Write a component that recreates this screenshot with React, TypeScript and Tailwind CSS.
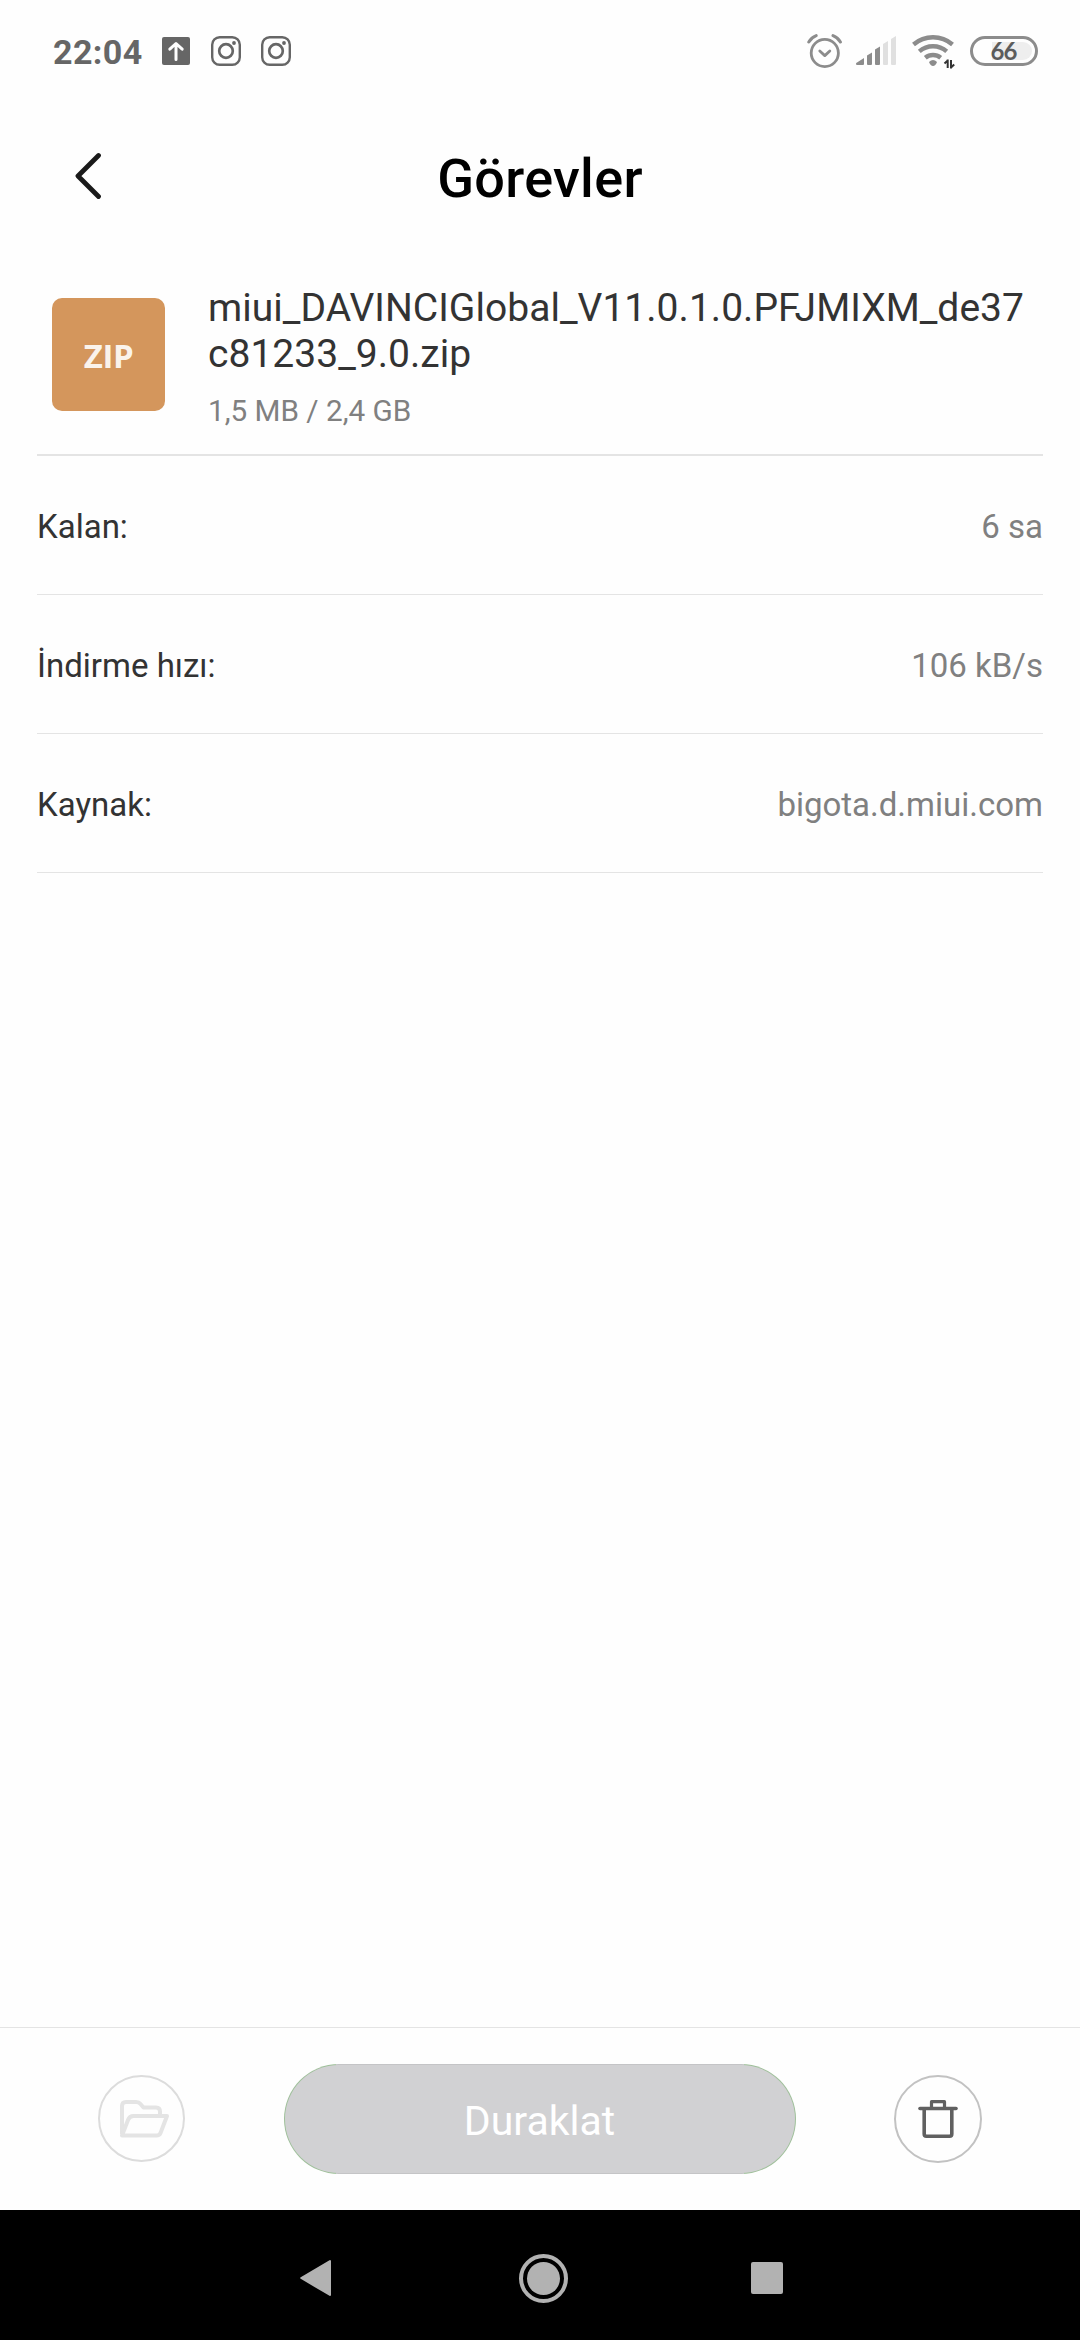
interface DetailRowProps {
  label: string;
  value: string;
}

const details: DetailRowProps[] = [
  { label: 'Kalan:', value: '6 sa' },
  { label: 'İndirme hızı:', value: '106 kB/s' },
  { label: 'Kaynak:', value: 'bigota.d.miui.com' },
];

function UploadIcon() {
  return (
    <svg width="28" height="28" viewBox="0 0 28 28" fill="none">
      <rect width="28" height="28" rx="2" fill="#666" />
      <path d="M14 22.500V7M7.800 12.200L14 6.500l6.200 5.700" stroke="#fefefe" strokeWidth="3" strokeLinecap="round" strokeLinejoin="round" />
    </svg>
  );
}

function InstagramIcon() {
  return (
    <svg width="30" height="30" viewBox="0 0 30 30" fill="none" stroke="#666">
      <rect x="1.2" y="1.2" width="27.6" height="27.6" rx="7.5" strokeWidth="2.4" />
      <circle cx="15" cy="15" r="6.8" strokeWidth="2.7" />
      <circle cx="23" cy="7" r="1.9" fill="#666" stroke="none" />
    </svg>
  );
}

function AlarmIcon() {
  return (
    <svg width="35" height="34" viewBox="0 0 35 34" fill="none" stroke="#8c8c8c" strokeLinecap="round">
      <circle cx="17.8" cy="19" r="13.6" strokeWidth="2.8" />
      <path d="M12.8 17l5 4.6 5-4.6" strokeWidth="2.8" strokeLinejoin="round" />
      <path d="M1.8 8Q4.3 3.6 9.2 1.6M33.4 8Q31 3.6 26 1.6" strokeWidth="3" />
    </svg>
  );
}

function SignalIcon() {
  return (
    <svg width="41" height="30" viewBox="0 0 41 30">
      <g fill="#8c8c8c">
        <path d="M1 26.5L8 22v6a1 1 0 0 1-1 1H1q-1 0-1-1.2Q0 27 1 26.5z" />
        <path d="M11 19.5L16 16.500V28a1 1 0 0 1-1 1H12a1 1 0 0 1-1-1z" />
        <path d="M19 13.5L24 10.5V28a1 1 0 0 1-1 1H20a1 1 0 0 1-1-1z" />
      </g>
      <g fill="#e0e0e0">
        <path d="M27 8L32 5V28a1 1 0 0 1-1 1H28a1 1 0 0 1-1-1z" />
        <path d="M35 3L40 0V28a1 1 0 0 1-1 1H36a1 1 0 0 1-1-1z" />
      </g>
    </svg>
  );
}

function WifiIcon() {
  return (
    <svg width="43" height="38" viewBox="0 0 43 38" fill="none">
      <g stroke="#8c8c8c" strokeWidth="4.4">
        <path d="M1.500 12.500a30 30 0 0 1 39 0" />
        <path d="M7.300 19.300a21 21 0 0 1 27.400 0" />
        <path d="M13.300 25.800a12 12 0 0 1 15.400 0" />
      </g>
      <path d="M17 30Q21 26 25 30Q23.5 34 21 34Q18.5 34 17 30z" fill="#8c8c8c" />
      <path d="M35.700 27.500V36M35.700 28.500L32.500 31.500M39 36.500V28M39 35.500L42.200 32.500" stroke="#333" strokeWidth="2" />
    </svg>
  );
}

function BatteryIcon() {
  return (
    <div className="flex h-[30px] w-[68px] items-center rounded-full border-[3px] border-[#8c8c8c] p-[3px]">
      <div className="flex h-[18px] w-full items-center justify-center rounded-full bg-[linear-gradient(to_right,transparent_16px,#eeeeee_16px)]">
        <span className="pr-px text-[24px] leading-[18px] font-bold tracking-[-1px] text-[#5c5c5c] font-['Lato','Roboto',sans-serif]">66</span>
      </div>
    </div>
  );
}

function StatusBar() {
  return (
    <div className="flex h-[102px] items-center justify-between pr-[42px] pl-[53px]">
      <div className="flex items-center">
        <span className="mr-5 w-[89px] pt-px text-[34px] leading-[40px] font-bold tracking-[0.4px] text-[#666]">22:04</span>
        <UploadIcon />
        <div className="ml-[21px] flex gap-5">
          <InstagramIcon />
          <InstagramIcon />
        </div>
      </div>
      <div className="flex items-center">
        <AlarmIcon />
        <div className="ml-[14px]">
          <SignalIcon />
        </div>
        <div className="ml-[15px]">
          <WifiIcon />
        </div>
        <div className="ml-[15px]">
          <BatteryIcon />
        </div>
      </div>
    </div>
  );
}

function Header() {
  return (
    <header className="grid h-[154px] grid-cols-[1fr_auto_1fr] items-center">
      <button className="mb-[6px] ml-[75px] w-[27px]" aria-label="Geri">
        <svg width="27" height="48" viewBox="0 0 27 48" fill="none" stroke="#1a1a1a" strokeWidth="4.8" strokeLinecap="round" strokeLinejoin="round">
          <path d="M23.500 3.5L3 24l20.5 20.5" />
        </svg>
      </button>
      <h1 className="text-[54px] leading-[62px] font-medium tracking-[0.3px] text-black">Görevler</h1>
    </header>
  );
}

function FileInfo() {
  return (
    <section className="flex h-[200px] border-b-2 border-[#e4e4e4] pl-[15px]">
      <div className="mt-[42px] flex size-[113px] shrink-0 items-center justify-center rounded-[10px] bg-[#d4965c]">
        <span className="pt-[3px] text-[33px] leading-[40px] font-bold tracking-[-0.5px] text-[#faf3ec] font-['Open_Sans',sans-serif]">ZIP</span>
      </div>
      <div className="ml-[43px] w-[824px] pt-[29px]">
        <p className="text-[39px] leading-[46px] tracking-[0.03px] break-all text-[#333]">miui_DAVINCIGlobal_V11.0.1.0.PFJMIXM_de37c81233_9.0.zip</p>
        <p className="mt-[14px] text-[29.7px] leading-[40px] text-[#808080]">1,5 MB / 2,4 GB</p>
      </div>
    </section>
  );
}

function DetailRow({ label, value }: DetailRowProps) {
  return (
    <div className="flex h-[139px] items-center justify-between border-b border-[#e4e4e4] pt-[3px] text-[33px] leading-[40px]">
      <span className="text-[#333]">{label}</span>
      <span className="text-[#808080]">{value}</span>
    </div>
  );
}

function ActionBar() {
  return (
    <div className="flex h-[183px] items-center justify-between border-t border-[#e4e4e4] px-[98px]">
      <button className="mb-px flex size-[87px] items-center justify-center rounded-full border-2 border-[#dcdcdc]" aria-label="Aç">
        <svg className="ml-[5px]" width="50" height="38" viewBox="0 0 50 38" fill="none" stroke="#e4e4e4" strokeWidth="4" strokeLinejoin="round">
          <path d="M3 34V6q0-4 4-4h10q3 0 4.5 2l3 3.5H37q4 0 4 4V16" />
          <path d="M3 35.5L9 20q1.5-4 5.5-4H48L41.5 33q-1 2.5-4 2.5z" />
        </svg>
      </button>
      <button className="h-[110px] w-[512px] rounded-full bg-[linear-gradient(to_right,#9fc09a_52px,#c4c4c6_52px,#c4c4c6_460px,#9fc09a_460px)] p-px">
        <span className="flex h-full items-center justify-center rounded-full bg-[#d1d1d3] pt-[4px] text-[41px] leading-[48px] text-white">Duraklat</span>
      </button>
      <button className="flex size-[88px] items-center justify-center rounded-full border-2 border-[#c2c2c2]" aria-label="Sil">
        <svg width="40" height="38" viewBox="0 0 40 38" fill="none" stroke="#606060">
          <path d="M2 8.5H38" strokeWidth="3.6" strokeLinecap="round" />
          <path d="M13.5 8V1.7H26.5V8" strokeWidth="3.2" strokeLinejoin="round" />
          <path d="M6.2 9V34q0 2.2 2.2 2.2H31.6q2.2 0 2.2-2.2V9" strokeWidth="3.6" />
        </svg>
      </button>
    </div>
  );
}

function NavBar() {
  return (
    <nav className="flex h-[130px] items-center bg-black pt-[6px] pl-[300px]">
      <svg width="31" height="38" viewBox="0 0 31 38" fill="#b2b2b2" stroke="#b2b2b2" strokeWidth="2" strokeLinejoin="round">
        <path d="M1.2 19L30 2V36z" />
      </svg>
      <svg className="ml-[188px]" width="49" height="49" viewBox="0 0 49 49">
        <circle cx="24.5" cy="24.5" r="22.5" fill="none" stroke="#b2b2b2" strokeWidth="4" />
        <circle cx="24.5" cy="24.5" r="16.5" fill="#b2b2b2" />
      </svg>
      <div className="ml-[183px] size-8 rounded-[2px] bg-[#b2b2b2]" />
    </nav>
  );
}

export default function App() {
  return (
    <div className="flex h-[2340px] w-[1080px] flex-col overflow-hidden bg-[#fefefe] font-['Roboto',sans-serif]">
      <StatusBar />
      <Header />
      <main className="flex-1 px-[37px]">
        <FileInfo />
        {details.map((row) => (
          <DetailRow key={row.label} label={row.label} value={row.value} />
        ))}
      </main>
      <ActionBar />
      <NavBar />
    </div>
  );
}
